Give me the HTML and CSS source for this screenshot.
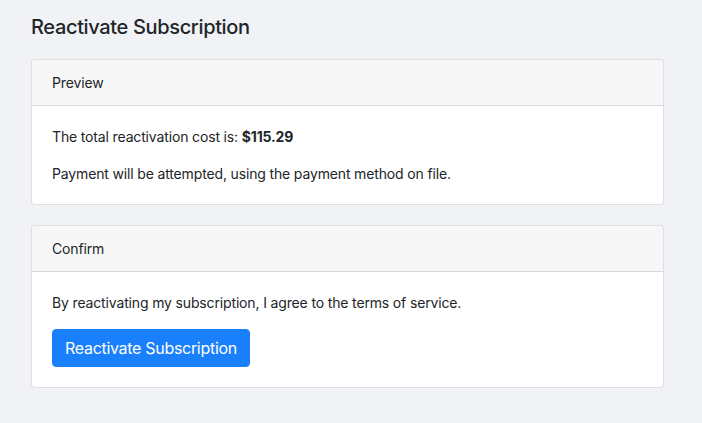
FILE: index.html
```html
<!DOCTYPE html>
<html lang="en">
<head>
    <meta charset="UTF-8">
    <meta name="viewport" content="width=device-width, initial-scale=1.0">
    <title>Reactivate Subscription</title>
    <link rel="stylesheet" href="styles.css">
</head>
<body>
    <div class="page">
        <h4 class="page-title">Reactivate Subscription</h4>

        <div class="card">
            <div class="card-header">Preview</div>
            <div class="card-body">
                <p>The total reactivation cost is: <strong>$115.29</strong></p>
                <p>Payment will be attempted, using the payment method on file.</p>
            </div>
        </div>

        <div class="card">
            <div class="card-header">Confirm</div>
            <div class="card-body">
                <p>By reactivating my subscription, I agree to the terms of service.</p>
                <button class="btn btn-primary">Reactivate Subscription</button>
            </div>
        </div>
    </div>
</body>
</html>
```

FILE: styles.css
```css
body {
    margin: 0;
    font-family: Inter, "Noto Sans", sans-serif;
    font-size: 14px;
    line-height: 1.5;
    letter-spacing: -0.15px;
    color: #212529;
    background-color: #f1f2f6;
}

.page {
    width: 633px;
    padding: 15px 0 0 31px;
}

.page-title {
    margin: 0 0 20px;
    font-size: 20px;
    font-weight: 500;
    line-height: 1.2;
    letter-spacing: -0.35px;
}

.card {
    background-color: #fff;
    border: 1px solid rgba(0, 0, 0, 0.125);
    border-radius: 4px;
    margin-bottom: 20px;
    overflow: hidden;
}

.card-header {
    padding: 12px 20px;
    background-color: rgba(0, 0, 0, 0.03);
    border-bottom: 1px solid rgba(0, 0, 0, 0.125);
}

.card-body {
    padding: 20px;
}

.card-body p {
    margin: 0 0 16px;
}

.card-body p:last-child {
    margin-bottom: 0;
}

.btn {
    font-family: inherit;
    font-size: 16px;
    line-height: 1.5;
    letter-spacing: -0.3px;
    padding: 6px 12px;
    border: 1px solid transparent;
    border-radius: 4px;
    cursor: pointer;
}

.btn-primary {
    color: #fff;
    background-color: #1a7ffb;
    border-color: #1a7ffb;
}
```
